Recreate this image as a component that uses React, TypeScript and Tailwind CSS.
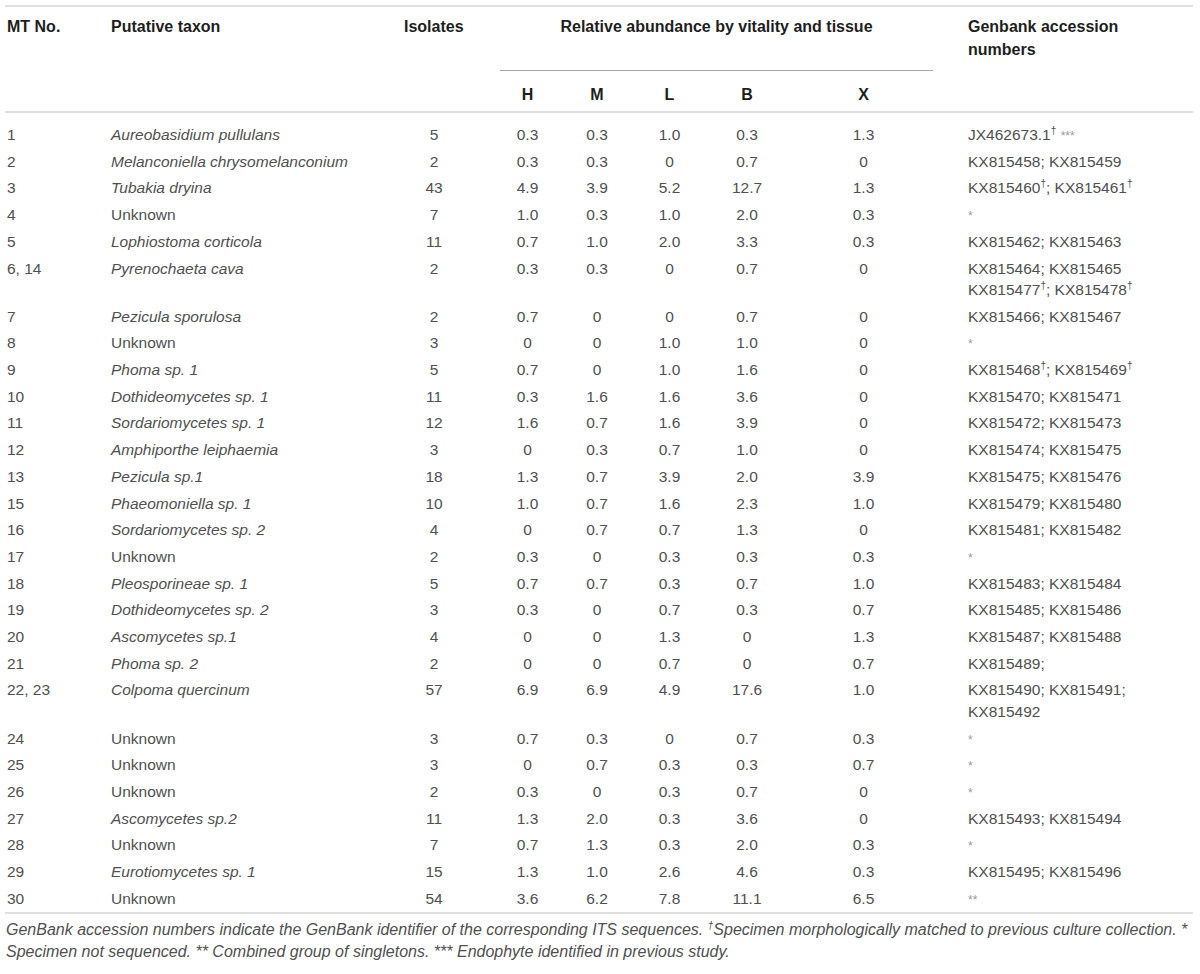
import React from "react";

type Row = {
  mt: string;
  taxon: string;
  italic: boolean;
  iso: string;
  v: string[];
  gen: React.ReactNode;
};

const D = () => <span className="text-[10px] leading-none relative -top-[6px]">†</span>;
const Star = ({ s }: { s: string }) => <span className="text-[#9a9a9a] text-[12px] leading-none">{s}</span>;

const rows: Row[] = [
  { mt: "1", taxon: "Aureobasidium pullulans", italic: true, iso: "5", v: ["0.3", "0.3", "1.0", "0.3", "1.3"], gen: <>JX462673.1<D /> <Star s="***" /></> },
  { mt: "2", taxon: "Melanconiella chrysomelanconium", italic: true, iso: "2", v: ["0.3", "0.3", "0", "0.7", "0"], gen: "KX815458; KX815459" },
  { mt: "3", taxon: "Tubakia dryina", italic: true, iso: "43", v: ["4.9", "3.9", "5.2", "12.7", "1.3"], gen: <>KX815460<D />; KX815461<D /></> },
  { mt: "4", taxon: "Unknown", italic: false, iso: "7", v: ["1.0", "0.3", "1.0", "2.0", "0.3"], gen: <Star s="*" /> },
  { mt: "5", taxon: "Lophiostoma corticola", italic: true, iso: "11", v: ["0.7", "1.0", "2.0", "3.3", "0.3"], gen: "KX815462; KX815463" },
  { mt: "6, 14", taxon: "Pyrenochaeta cava", italic: true, iso: "2", v: ["0.3", "0.3", "0", "0.7", "0"], gen: <>KX815464; KX815465<br />KX815477<D />; KX815478<D /></> },
  { mt: "7", taxon: "Pezicula sporulosa", italic: true, iso: "2", v: ["0.7", "0", "0", "0.7", "0"], gen: "KX815466; KX815467" },
  { mt: "8", taxon: "Unknown", italic: false, iso: "3", v: ["0", "0", "1.0", "1.0", "0"], gen: <Star s="*" /> },
  { mt: "9", taxon: "Phoma sp. 1", italic: true, iso: "5", v: ["0.7", "0", "1.0", "1.6", "0"], gen: <>KX815468<D />; KX815469<D /></> },
  { mt: "10", taxon: "Dothideomycetes sp. 1", italic: true, iso: "11", v: ["0.3", "1.6", "1.6", "3.6", "0"], gen: "KX815470; KX815471" },
  { mt: "11", taxon: "Sordariomycetes sp. 1", italic: true, iso: "12", v: ["1.6", "0.7", "1.6", "3.9", "0"], gen: "KX815472; KX815473" },
  { mt: "12", taxon: "Amphiporthe leiphaemia", italic: true, iso: "3", v: ["0", "0.3", "0.7", "1.0", "0"], gen: "KX815474; KX815475" },
  { mt: "13", taxon: "Pezicula sp.1", italic: true, iso: "18", v: ["1.3", "0.7", "3.9", "2.0", "3.9"], gen: "KX815475; KX815476" },
  { mt: "15", taxon: "Phaeomoniella sp. 1", italic: true, iso: "10", v: ["1.0", "0.7", "1.6", "2.3", "1.0"], gen: "KX815479; KX815480" },
  { mt: "16", taxon: "Sordariomycetes sp. 2", italic: true, iso: "4", v: ["0", "0.7", "0.7", "1.3", "0"], gen: "KX815481; KX815482" },
  { mt: "17", taxon: "Unknown", italic: false, iso: "2", v: ["0.3", "0", "0.3", "0.3", "0.3"], gen: <Star s="*" /> },
  { mt: "18", taxon: "Pleosporineae sp. 1", italic: true, iso: "5", v: ["0.7", "0.7", "0.3", "0.7", "1.0"], gen: "KX815483; KX815484" },
  { mt: "19", taxon: "Dothideomycetes sp. 2", italic: true, iso: "3", v: ["0.3", "0", "0.7", "0.3", "0.7"], gen: "KX815485; KX815486" },
  { mt: "20", taxon: "Ascomycetes sp.1", italic: true, iso: "4", v: ["0", "0", "1.3", "0", "1.3"], gen: "KX815487; KX815488" },
  { mt: "21", taxon: "Phoma sp. 2", italic: true, iso: "2", v: ["0", "0", "0.7", "0", "0.7"], gen: "KX815489;" },
  { mt: "22, 23", taxon: "Colpoma quercinum", italic: true, iso: "57", v: ["6.9", "6.9", "4.9", "17.6", "1.0"], gen: <>KX815490; KX815491;<br />KX815492</> },
  { mt: "24", taxon: "Unknown", italic: false, iso: "3", v: ["0.7", "0.3", "0", "0.7", "0.3"], gen: <Star s="*" /> },
  { mt: "25", taxon: "Unknown", italic: false, iso: "3", v: ["0", "0.7", "0.3", "0.3", "0.7"], gen: <Star s="*" /> },
  { mt: "26", taxon: "Unknown", italic: false, iso: "2", v: ["0.3", "0", "0.3", "0.7", "0"], gen: <Star s="*" /> },
  { mt: "27", taxon: "Ascomycetes sp.2", italic: true, iso: "11", v: ["1.3", "2.0", "0.3", "3.6", "0"], gen: "KX815493; KX815494" },
  { mt: "28", taxon: "Unknown", italic: false, iso: "7", v: ["0.7", "1.3", "0.3", "2.0", "0.3"], gen: <Star s="*" /> },
  { mt: "29", taxon: "Eurotiomycetes sp. 1", italic: true, iso: "15", v: ["1.3", "1.0", "2.6", "4.6", "0.3"], gen: "KX815495; KX815496" },
  { mt: "30", taxon: "Unknown", italic: false, iso: "54", v: ["3.6", "6.2", "7.8", "11.1", "6.5"], gen: <Star s="**" /> },
];

export default function App() {
  return (
    <div className="w-[1200px] h-[974px] bg-white pt-[5px] pl-[5px] overflow-hidden" style={{ fontFamily: '"Liberation Sans", Arial, sans-serif' }}>
      <table className="w-[1188px] table-fixed border-collapse">
        <colgroup>
          <col className="w-[106px]" />
          <col className="w-[293px]" />
          <col className="w-[96px]" />
          <col className="w-[55px]" />
          <col className="w-[84px]" />
          <col className="w-[61px]" />
          <col className="w-[94px]" />
          <col className="w-[139px]" />
          <col className="w-[260px]" />
        </colgroup>
        <thead className="text-[16px] font-bold text-[#1e1e1e] leading-[23px]">
          <tr className="border-t-2 border-[#e0e0e0]">
            <th rowSpan={2} className="text-left align-top pl-[2px] pt-[7.5px] font-bold">MT No.</th>
            <th rowSpan={2} className="text-left align-top pt-[7.5px] font-bold">Putative taxon</th>
            <th rowSpan={2} className="text-left align-top pt-[7.5px] font-bold">Isolates</th>
            <th colSpan={5} className="text-center align-top pt-[7.5px] h-[64px] border-b border-[#a8a8a8] font-bold">Relative abundance by vitality and tissue</th>
            <th rowSpan={2} className="text-left align-top pl-[35px] pt-[7.5px] font-bold">Genbank accession<br />numbers</th>
          </tr>
          <tr className="border-b-2 border-[#e0e0e0]">
            <th className="text-center align-top pt-[12.5px] h-[42px] font-bold">H</th>
            <th className="text-center align-top pt-[12.5px] font-bold">M</th>
            <th className="text-center align-top pt-[12.5px] font-bold">L</th>
            <th className="text-center align-top pt-[12.5px] font-bold">B</th>
            <th className="text-center align-top pt-[12.5px] font-bold">X</th>
          </tr>
        </thead>
        <tbody className="text-[15.5px] text-[#505050] leading-[21.5px]">
          <tr className="h-[9.5px]"><td colSpan={9} className="p-0"></td></tr>
          {rows.map((r, i) => (
            <tr key={i} className="align-top">
              <td className="pl-[2px] py-[2.6px]">{r.mt}</td>
              <td className={`py-[2.6px] ${r.italic ? "italic" : ""}`}>{r.taxon}</td>
              <td className="py-[2.6px] text-center pr-[36px]">{r.iso}</td>
              {r.v.map((x, j) => (
                <td key={j} className="py-[2.6px] text-center">{x}</td>
              ))}
              <td className="py-[2.6px] pl-[35px] whitespace-nowrap">{r.gen}</td>
            </tr>
          ))}
        </tbody>
      </table>
      <div className="w-[1188px] border-t-2 border-[#e0e0e0] pt-[5px] pl-[1px] text-[16px] leading-[22px] italic text-[#505050] whitespace-nowrap">
        GenBank accession numbers indicate the GenBank identifier of the corresponding ITS sequences.{" "}
        <span className="text-[10px] leading-none relative -top-[6px]">†</span>Specimen morphologically matched to previous culture collection. *
        <br />
        Specimen not sequenced. ** Combined group of singletons. *** Endophyte identified in previous study.
      </div>
    </div>
  );
}
